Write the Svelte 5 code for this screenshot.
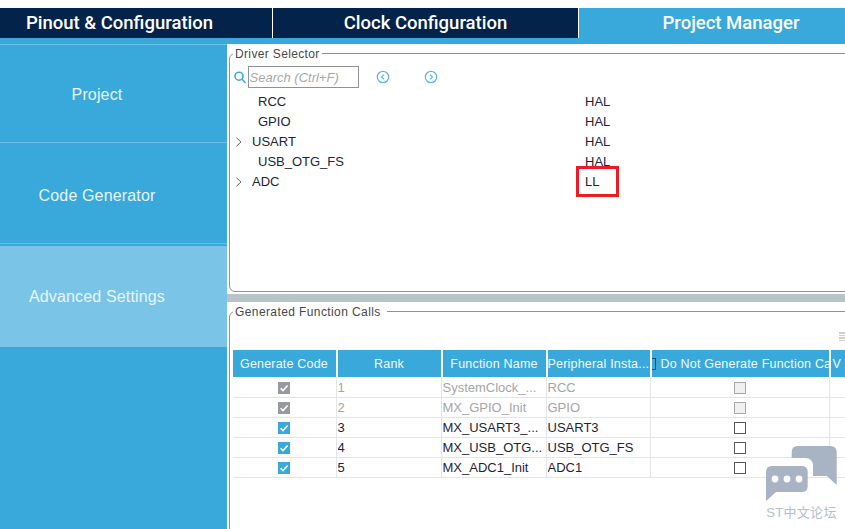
<script>
	const tabs = [
		{ label: 'Pinout & Configuration', width: 273, side: 'first' },
		{ label: 'Clock Configuration', width: 306 },
		{ label: 'Project Manager', width: 266, side: 'last', active: true }
	];
	const sections = [
		{ label: 'Project' },
		{ label: 'Code Generator' },
		{ label: 'Advanced Settings', active: true }
	];
	const drivers = [
		{ name: 'RCC', lib: 'HAL' },
		{ name: 'GPIO', lib: 'HAL' },
		{ name: 'USART', lib: 'HAL', more: true },
		{ name: 'USB_OTG_FS', lib: 'HAL' },
		{ name: 'ADC', lib: 'LL', more: true, marked: true }
	];
	const calls = [
		{ rank: 1, fn: 'SystemClock_...', peripheral: 'RCC', locked: true },
		{ rank: 2, fn: 'MX_GPIO_Init', peripheral: 'GPIO', locked: true },
		{ rank: 3, fn: 'MX_USART3_...', peripheral: 'USART3' },
		{ rank: 4, fn: 'MX_USB_OTG...', peripheral: 'USB_OTG_FS' },
		{ rank: 5, fn: 'MX_ADC1_Init', peripheral: 'ADC1' }
	];
</script>

<div class="page">
	<nav class="tabs">
		{#each tabs as tab}
			<div class="tab {tab.side}" class:active={tab.active} style="width: {tab.width}px">{tab.label}</div>
		{/each}
	</nav>

	<div class="body">
		<aside class="sidebar">
			{#each sections as section}
				<div class="section" class:active={section.active}>{section.label}</div>
			{/each}
		</aside>

		<main class="main">
			<fieldset class="panel drivers">
				<legend>Driver Selector</legend>
				<div class="search">
					<svg class="lens" width="12" height="13" viewBox="0 0 12 13">
						<circle cx="5" cy="5.2" r="4" />
						<path d="M8 8.2 L11.6 12" />
					</svg>
					<div class="input">Search (Ctrl+F)</div>
					<svg class="nav first" width="14" height="14" viewBox="0 0 14 14">
						<circle cx="7" cy="7" r="5.7" />
						<path d="M8 4.6 L5.6 7 L8 9.4" />
					</svg>
					<svg class="nav second" width="14" height="14" viewBox="0 0 14 14">
						<circle cx="7" cy="7" r="5.7" />
						<path d="M6 4.6 L8.4 7 L6 9.4" />
					</svg>
				</div>
				<div class="tree">
					{#each drivers as d}
						<div class="driver">
							<div class="name" class:more={d.more}>
								{#if d.more}
									<svg width="8" height="10" viewBox="0 0 8 10"><path d="M1.5 0.8 L6 5 L1.5 9.2" /></svg>
								{/if}
								{d.name}
							</div>
							<div class="lib">
								{d.lib}
								{#if d.marked}<span class="mark"></span>{/if}
							</div>
						</div>
					{/each}
				</div>
			</fieldset>

			<div class="divider"></div>

			<fieldset class="panel functions">
				<legend>Generated Function Calls</legend>
				<div class="tools">
					<span class="lines"><i></i><i></i><i></i><i></i></span>
				</div>
				<div class="grid head">
					<div>Generate Code</div>
					<div>Rank</div>
					<div>Function Name</div>
					<div class="start">Peripheral Insta...</div>
					<div class="start clip"><span class="cut"></span>Do Not Generate Function Ca</div>
					<div class="start last">V</div>
				</div>
				{#each calls as call}
					<div class="grid row" class:locked={call.locked}>
						<div class="mid">
							<span class="tick">
								<svg width="12" height="12" viewBox="0 0 12 12"><path d="M2.6 6.2 L5 8.6 L9.6 3.6" /></svg>
							</span>
						</div>
						<div>{call.rank}</div>
						<div>{call.fn}</div>
						<div>{call.peripheral}</div>
						<div class="mid"><span class="box"></span></div>
						<div></div>
					</div>
				{/each}
			</fieldset>
		</main>
	</div>

	<div class="watermark">
		<svg width="71" height="55" viewBox="0 0 71 55">
			<path d="M25.7 12 V6 Q25.7 0 32 0 H64 Q70.7 0 70.7 6 V39 L61 30 H47 V20 Q47 12 39 12 Z" />
			<path d="M0 26 Q0 20 6 20 H36 Q41.7 20 41.7 26 V40 Q41.7 46 36 46 H10 L0 55 Z" />
			<circle cx="9" cy="33" r="3.4" />
			<circle cx="21" cy="33" r="3.4" />
			<circle cx="33" cy="33" r="3.4" />
		</svg>
		<span>ST中文论坛</span>
	</div>
</div>

<style>
	:global(body) {
		background: #fff;
	}

	.page {
		position: relative;
		width: 845px;
		height: 529px;
		overflow: hidden;
		padding-top: 8px;
		box-sizing: border-box;
		font-family: 'Liberation Sans', Arial, sans-serif;
		font-size: 13px;
		color: #1d2438;
	}

	.tabs {
		display: flex;
		height: 30px;
		padding-bottom: 6px;
		background: #39a9dc;
	}

	.tab {
		box-sizing: border-box;
		background: #03234b;
		border-right: 1px solid #fff;
		color: #fff;
		font-family: Roboto, sans-serif;
		font-weight: 500;
		font-size: 18.5px;
		line-height: 31px;
		text-align: center;
	}

	.tab.first {
		padding-right: 33px;
	}

	.tab.last {
		padding-left: 38px;
	}

	.tab.active {
		background: #39a9dc;
		border-right: 0;
		flex: 1;
	}

	.body {
		display: flex;
		height: 485px;
	}

	.sidebar {
		width: 227px;
		flex: none;
		background: #39a9dc;
	}

	.section {
		height: 97px;
		line-height: 99px;
		border-top: 1px solid #6cbfe6;
		padding-right: 33px;
		text-align: center;
		color: #e6f5fc;
		font-size: 16px;
		letter-spacing: 0.15px;
	}

	.section:nth-child(2) {
		padding-top: 3px;
		border-bottom: 1px solid #6cbfe6;
	}

	.section.active {
		height: 101px;
		line-height: 102px;
		margin-top: 2px;
		border: 0;
		background: #7ac4e8;
	}

	.main {
		flex: 1;
		min-width: 0;
	}

	.panel {
		margin: 0 -20px 0 2px;
		padding: 0;
		box-sizing: border-box;
		border: 1.5px solid #8f9296;
		border-radius: 6px;
		min-width: 0;
	}

	.panel legend {
		margin-left: 3px;
		padding: 2px 2px 0 2px;
		font-size: 12px;
		line-height: 14px;
		color: #45474f;
		letter-spacing: 0.35px;
	}

	.drivers {
		margin-top: 1px;
		height: 247px;
	}

	.search {
		display: flex;
		align-items: center;
		height: 22px;
		margin-top: 5px;
		padding-left: 3.5px;
	}

	.lens {
		fill: none;
		stroke: #39a9dc;
		stroke-width: 1.6;
		margin-right: 2px;
	}

	.input {
		box-sizing: border-box;
		width: 111px;
		height: 22px;
		border: 1.5px solid #8f9296;
		padding-left: 1px;
		font-style: italic;
		font-size: 13px;
		line-height: 21px;
		color: #a8a8a8;
	}

	.nav {
		fill: none;
		stroke: #58b6e2;
		stroke-width: 1.2;
	}

	.nav.first {
		margin-left: 17px;
	}

	.nav.second {
		margin-left: 34px;
	}

	.tree {
		margin-top: 4px;
	}

	.driver {
		display: flex;
		height: 20px;
		line-height: 20px;
	}

	.name {
		width: 355px;
		padding-left: 28px;
		box-sizing: border-box;
	}

	.name.more {
		display: flex;
		align-items: center;
		padding-left: 5px;
		gap: 9px;
	}

	.name svg {
		fill: none;
		stroke: #6a6a6a;
		stroke-width: 1;
		margin-top: -1px;
	}

	.lib {
		position: relative;
	}

	.mark {
		position: absolute;
		left: -9px;
		top: -6px;
		width: 43px;
		height: 31px;
		box-sizing: border-box;
		border: 3px solid #ed1c24;
	}

	.divider {
		height: 8px;
		margin-top: 2px;
		background: #b9c4ca;
	}

	.functions {
		margin-top: 1px;
		height: 260px;
		padding-left: 2.5px;
		border-bottom-left-radius: 0;
	}

	.functions legend {
		margin-left: 0.5px;
		padding-right: 6px;
		letter-spacing: 0.4px;
	}

	.tools {
		display: flex;
		justify-content: flex-end;
		height: 31px;
		padding-right: 18px;
	}

	.lines {
		display: flex;
		flex-direction: column;
		gap: 1px;
		width: 7px;
		margin-top: 13px;
	}

	.lines i {
		height: 1.5px;
		background: #cfcfcf;
	}

	.grid {
		display: grid;
		grid-template-columns: 105px 105px 105px 104px 179px 40px;
	}

	.head {
		height: 27px;
		margin-bottom: 1px;
		color: #f2fafe;
		font-size: 12.5px;
		line-height: 28px;
	}

	.head div {
		background: #39a9dc;
		margin-right: 2px;
		text-align: center;
		white-space: nowrap;
		overflow: hidden;
		letter-spacing: 0.2px;
	}

	.head .start {
		text-align: left;
	}

	.head .last {
		padding-left: 2px;
	}

	.head .clip {
		display: flex;
		align-items: center;
	}

	.cut {
		flex: none;
		width: 3px;
		height: 10px;
		margin-right: 5px;
		border: 1.5px solid #3d4650;
		border-left: 0;
	}

	.row {
		height: 20px;
		box-sizing: border-box;
		border-bottom: 1px solid #e2e5e9;
		line-height: 19px;
	}

	.row div {
		border-right: 1px solid #e2e5e9;
		white-space: nowrap;
		overflow: hidden;
		margin-right: 1px;
	}

	.row.locked {
		color: #a5a5a5;
	}

	.row .mid {
		display: flex;
		align-items: center;
		justify-content: center;
	}

	.tick {
		display: block;
		width: 12px;
		height: 12px;
		background: #39a9dc;
	}

	.tick svg {
		display: block;
		fill: none;
		stroke: #fff;
		stroke-width: 1.5;
	}

	.locked .tick {
		background: #96999d;
	}

	.box {
		box-sizing: border-box;
		width: 12px;
		height: 12px;
		border: 1.3px solid #555;
		background: #fff;
	}

	.locked .box {
		border-color: #a8a8a8;
		background: #f0f0f1;
	}

	.watermark {
		position: absolute;
		left: 766px;
		top: 446px;
		display: flex;
		flex-direction: column;
		align-items: center;
		width: 71px;
	}

	.watermark svg {
		fill: #a8b3c3;
	}

	.watermark circle {
		fill: #fff;
	}

	.watermark span {
		margin-top: 3px;
		font-size: 13px;
		line-height: 18px;
		letter-spacing: 0.3px;
		color: #b4becc;
		white-space: nowrap;
		font-family: 'Liberation Sans', 'Noto Sans CJK SC', sans-serif;
	}
</style>
